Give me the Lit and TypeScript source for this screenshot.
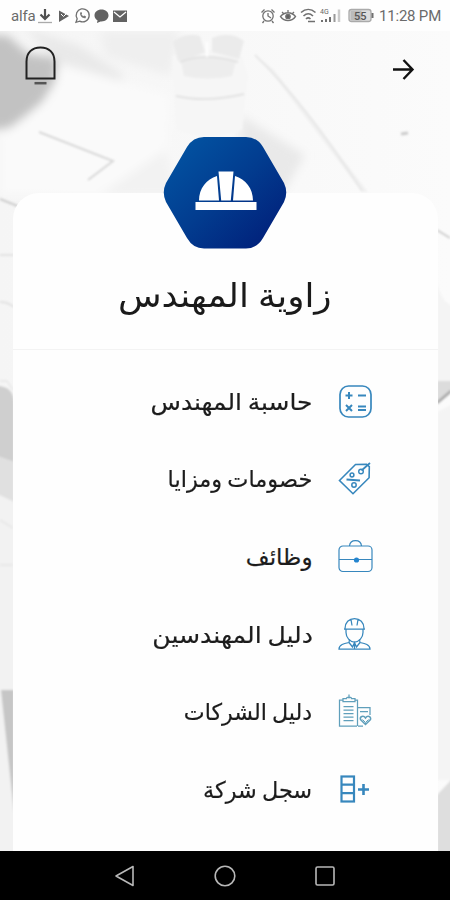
import { LitElement, html, svg, css } from "lit";
import { customElement, property } from "lit/decorators.js";

const icons: Record<string, unknown> = {
  calculator: svg`<g stroke-width="1.700"><rect x="2" y="2" width="31" height="31" rx="8.500"/>
    <path d="M11 8v7M7.500 11.500h7M20 11.500h8M8 21l6 6M14 21l-6 6M20 22.500h8M20 26h8" stroke-width="2"/></g>`,
  tag: svg`<path d="M1.500 19.500 17.500 3.500l11-.3 2.800 2.500-.2 11L15 32.700z" stroke-width="1.600"/>
    <circle cx="23" cy="10.500" r="2.300" stroke-width="1.400"/><path d="M23.500 9.500 32 2" stroke-width="1.700"/>
    <path d="M8.500 18.500l13.500 1" stroke-width="1.900"/><circle cx="14" cy="14" r="1.900" stroke-width="1.500"/><circle cx="16" cy="24" r="2.200" stroke-width="1.500"/>`,
  briefcase: svg`<g stroke-width="1.200"><rect x="1" y="7" width="33" height="25.500" rx="4"/><path d="M11.500 7c.3-3.500 2.500-5.300 6-5.300s5.700 1.800 6 5.300M1 20.500h33"/></g>
    <circle cx="18.500" cy="21" r="2.600" fill="#2485cf" stroke="none"/>`,
  engineer: svg`<g stroke-width="1.250"><path d="M7 11.500C7 5.500 11 1.500 16.500 1.500S26 5.500 26 11.500M6 12h21M8 12v3.500c0 5 4 9.500 8.500 9.500s8.500-4.500 8.500-9.500V12M13 2.500l1 6M20 2.500l-1 6"/>
    <path d="M11.500 22.500l-.5 3c-5 1-10 2-10 6.500h31c0-4.500-5-5.500-10-6.500l-.5-3M11 25.500l3.500 4.500 2-4.500 2 4.500 3.500-4.500M16.500 26v6"/></g>`,
  clipboard: svg`<g stroke="#5f9fbb" stroke-width="1.250"><path d="M19 32H1.500V6H5M17 6h2.500v26M5 7.500V4.500h3.500c0-2 5-2 5 0H17v3zM11 .5v4M5.500 12.500h10M5.500 16h10M5.500 19.500h10M5.500 23h10M5.500 26.500h10"/>
    <path d="M20 13.500h12V21M22 17.500h8M20 32h5"/></g><path d="M27.500 30.500l-5-5c-1-3 3-4.500 5-1.500 2-3 6-1.500 5 1.500z" stroke="#5f9fbb" stroke-width="1.500"/><path d="M24.500 25.500l3 3 3-3" stroke="#5f9fbb"/>`,
  register: svg`<g stroke-width="2.200"><rect x="3.500" y="4.500" width="12.500" height="25"/><path d="M4 12.700h12M4 21.200h12"/></g><path d="M25.500 12v11M20 17.500h11" stroke-width="2.600"/>`,
};

const menu = [
  { icon: "calculator", label: "حاسبة المهندس", scale: 1.083 },
  { icon: "tag", label: "خصومات ومزايا", scale: 0.976 },
  { icon: "briefcase", label: "وظائف", scale: 1 },
  { icon: "engineer", label: "دليل المهندسين", scale: 1.093 },
  { icon: "clipboard", label: "دليل الشركات", scale: 0.964 },
  { icon: "register", label: "سجل شركة", scale: 0.973 },
];

@customElement("menu-row")
class MenuRow extends LitElement {
  @property() icon = "";
  @property() label = "";
  @property({ type: Number }) scale = 1;
  static styles = css`
    :host { display: flex; direction: rtl; align-items: center; height: 77.6px; padding-right: 65px; gap: 25px; }
    svg { width: 35px; height: 35px; flex: none; fill: none; stroke: #3787bd; }
    .label { font: 23px/32px "DejaVu Sans", sans-serif; color: #1c1c1c; white-space: nowrap; word-spacing: -2px; margin-top: 1px; transform-origin: right center; -webkit-text-stroke: .2px #1c1c1c; }
  `;
  render() {
    return html`<svg viewBox="0 0 35 35">${icons[this.icon]}</svg>
      <span class="label" style="transform:scaleX(${this.scale})">${this.label}</span>`;
  }
}

@customElement("status-bar")
class StatusBar extends LitElement {
  static styles = css`
    :host { display: flex; align-items: center; justify-content: space-between; height: 31px; background: #fefefe; color: #6b6b6b; font: 15px/31px Roboto, sans-serif; }
    .side { display: flex; align-items: center; height: 31px; }
    .left { padding-left: 11px; }
    .right { padding-right: 9px; }
    .carrier { width: 26px; letter-spacing: -.2px; }
    .clock { width: 62px; white-space: nowrap; letter-spacing: -.2px; }
    .carrier, .clock { margin-top: 2px; }
    svg { display: block; fill: none; stroke: #707070; stroke-width: 1.300; }
  `;
  render() {
    return html`
      <div class="side left"><span class="carrier">alfa</span>
        <svg width="92" height="31" viewBox="37 0 92 31">
          <path d="M45 9v9M40.500 14.500l4.500 4.500 4.500-4.500" stroke="#505050" stroke-width="2.200"/><path d="M38 22.500h14" stroke="#aaa"/>
          <path d="M59 10.500l10 5.500-10 6z" fill="#626262" stroke="none"/><path d="M61 14l2.500 2.500L68 12" stroke="#fff" stroke-width="1"/>
          <path d="M76 22.300l1.200-3.500a6.500 6.500 0 1 1 2.500 2.300z"/><path d="M80.200 12.500c-.8 3 2.200 6.200 5.300 5.700l.6-1.700-2-1-.9.800-1.700-1.800.6-1-.7-1.500z" fill="#777" stroke="none"/>
          <path d="M101.500 9.500c-4 0-7 2.500-7 6 0 2 1.200 3.800 3 4.800l-.5 2.700 3.500-1.600c4.500.4 8-2.300 8-5.900s-3-6-7-6z" fill="#626262" stroke="none"/>
          <path d="M113 10.500h14v11.500h-14z" fill="#626262" stroke="none"/><path d="M114 12l6 5 6-5" stroke="#fff" stroke-width="1.300"/>
        </svg></div>
      <div class="side right">
        <svg width="120" height="31" viewBox="258 0 120 31">
          <circle cx="267" cy="16" r="5.200"/><path d="M267 13v3l3 2M260.500 12.500l3-3M270.500 9.500l3 3M263 21l-1.500 2M271 21l1.500 2"/>
          <path d="M279.500 16.500c4-5 11-5 15 0-4 5.500-11 5.500-15 0zM281 12l2 2M287 10v3M293 12l-2 2"/><circle cx="287" cy="16.500" r="2.200" fill="#606060"/>
          <path d="M300 12.500c4.500-4 10-4 14.500 0M302.500 16c3-2.800 6.500-2.800 9.500 0M305 19c1.500-1.500 3-1.500 4.500 0M307 21.500h7" stroke-width="1.600"/>
          <text x="319" y="14" font-family="Roboto" font-size="7" stroke="none" fill="#666">4G</text>
          <path d="M321 22v-2M325 22v-3M329 22v-5" stroke-width="2"/><path d="M333.500 22V14" stroke="#999" stroke-width="2"/><path d="M338 22V9.500" stroke="#ccc" stroke-width="2.500"/>
          <rect x="348" y="9.500" width="22" height="12" rx="2.500" fill="#ddd" stroke="#aaa"/><path d="M349.500 10.500h11v10h-11z" fill="#bbb" stroke="none"/><path d="M371.500 13v5" stroke-width="2"/>
          <text x="353" y="20" font-family="Roboto" font-size="11" font-weight="500" stroke="none" fill="#555">55</text>
        </svg><span class="clock">11:28 PM</span></div>`;
  }
}

@customElement("desk-backdrop")
class DeskBackdrop extends LitElement {
  static styles = css`
    :host { display: block; position: absolute; inset: 0; }
    svg { display: block; width: 100%; height: 100%; }
  `;
  render() {
    return html`<svg viewBox="0 31 450 820" preserveAspectRatio="none">
      <defs>
        <linearGradient id="base" x2="1" y2="0"><stop stop-color="#f5f5f5"/><stop offset=".5" stop-color="#f8f8f8"/><stop offset="1" stop-color="#fbfbfb"/></linearGradient>
        <filter id="s" x="-30%" y="-30%" width="160%" height="160%"><feGaussianBlur stdDeviation="5"/></filter>
        <filter id="t"><feGaussianBlur stdDeviation="1"/></filter>
      </defs>
      <rect y="31" width="450" height="820" fill="url(#base)"/>
      <g filter="url(#s)">
        <path d="M-15 35 8 36 28 54 58 58 55 82 42 102 12 128-15 130z" fill="#c2c2c2"/>
        <path d="M25 28l55 18 45 30-8 8-60-22z" fill="#e9e9e9"/>
        <path d="M0 135 45 102 65 65 170 95 165 195H0z" fill="#fafafa"/>
        <path d="M100 31h80l-10 45-65-20z" fill="#efefef"/>
        <path d="M240 115 305 155 285 190 240 190z" fill="#e9e9e9"/>
        <path d="M165 150 100 195h75z" fill="#f2f2f2"/>
      </g>
      <g filter="url(#t)" fill="none">
        <path d="M172 56q30-12 70 0l6 20-6 54q-35 12-66 0z" fill="#f6f6f6"/>
        <path d="M181 61q25-9 55 0l-4 15q-25 5-48 0z" fill="#ededed"/>
        <path d="M180 62q25-10 58 0M176 96q30 7 68-2" stroke="#e2e2e2" stroke-width="2"/>
        <path d="M173 42q12-10 27-6l5 16q-12 6-27 9zM212 38q18-8 32 3l-5 18-27-7z" fill="#ebebeb"/>
        <path d="M207 42v15" stroke="#fff" stroke-width="2"/>
        <path d="M262 60l100 132h6L274 70z" fill="#f1f1f1"/>
        <path d="M255 55q50 48 107 136" stroke="#e7e7e7" stroke-width="2"/>
        <path d="M39 132 113 161 88 180" stroke="#d8d8d8" stroke-width="2"/>
        <path d="M0 199l20 8M437 230l13 8" stroke="#ccc" stroke-width="2"/>
        <path d="M401 134l7-1" stroke="#ccc" stroke-width="3"/><path d="M0 255h14M0 302q8 0 14 5" stroke="#e2e2e2" stroke-width="2"/>
        <path d="M-3 386q17 0 17 18v58l-17-6z" fill="#cfcfcf"/><path d="M-3 456l17 6v40l-17-8z" fill="#e0e0e0"/>
        <path d="M-3 494l17 8v350h-17z" fill="#f2f2f2"/>
        <path d="M0 381h7l6 9M0 520l13 8M0 565h13" stroke="#ddd"/>
        <path d="M1 690h13v122z" fill="#c6c6c6"/>
        <path d="M437 282q4 20 16 24v80h-16zM437 412l16-8v376h-16z" fill="#f4f4f4"/>
        <path d="M437 381h16v10l-16 13z" fill="#dcdcdc"/><path d="M437 403l14-12" stroke="#a6a6a6" stroke-width="2.500"/>
        <path d="M437 795l16-17v76h-16z" fill="#dedede"/>
      </g></svg>`;
  }
}

@customElement("app-root")
class AppRoot extends LitElement {
  static styles = css`
    :host { display: flex; flex-direction: column; width: 450px; height: 900px; overflow: hidden; background: #fff; }
    .main { position: relative; height: 820px; flex: none; display: flex; flex-direction: column; overflow: hidden; }
    .top { position: relative; display: flex; justify-content: space-between; padding: 14px 35px 0 24px; height: 92px; box-sizing: border-box; flex: none; }
    .bell { width: 33px; height: 42px; }
    .arrow { width: 24px; height: 24px; margin-top: 12px; }
    .content { position: relative; flex: none; display: flex; flex-direction: column; align-items: center; margin-top: 13px; }
    .badge { width: 124px; height: 113px; margin-bottom: -56px; z-index: 1; }
    .card { width: 425px; height: 670px; background: #fefefe; border-radius: 26px 26px 0 0; box-sizing: border-box; padding-top: 56px; }
    .title { height: 100px; margin: 0; border-bottom: 1.500px solid #f3f3f3; font: 33px/94px "DejaVu Sans", sans-serif; color: #1a1a1a; text-align: center; direction: rtl; white-space: nowrap; word-spacing: -2px; }
    .title span { display: inline-block; transform: scaleX(1.082); }
    .list { display: flex; flex-direction: column; padding-top: 12.5px; }
    .nav { height: 49px; background: #000; flex: none; display: flex; justify-content: center; gap: 76px; align-items: center; }
    .nav svg { width: 24px; height: 24px; fill: none; stroke: #b8b8b8; stroke-width: 1.600; }
  `;
  render() {
    return html`<status-bar></status-bar>
      <div class="main"><desk-backdrop></desk-backdrop>
        <div class="top">
          <svg class="bell" viewBox="0 0 33 42" fill="none" stroke="#222" stroke-width="2"><path d="M2.500 33.500V16.500C2.500 7.500 8 2.500 16.500 2.500S30.500 7.500 30.500 16.500v17z"/><path d="M10.500 38.200h12" stroke="#555" stroke-width="2.500"/></svg>
          <svg class="arrow" viewBox="0 0 24 24" fill="none" stroke="#111" stroke-width="2.400"><path d="M2 12.500h20M12.500 3l9 9.500-9 9.500"/></svg>
        </div>
        <div class="content">
          <svg class="badge" viewBox="0 0 124 113">
            <defs><linearGradient id="hex" x1=".1" y1=".1" x2=".9" y2=".9"><stop stop-color="#0252a1"/><stop offset=".5" stop-color="#023c8f"/><stop offset="1" stop-color="#01217b"/></linearGradient></defs>
            <path d="M41 1H83Q94 1 100 11L121 47Q125.500 56.500 121 66L100 102Q94 112.500 83 112.500H41Q30 112.500 24 102L3 66Q-1.500 56.500 3 47L24 11Q30 1 41 1Z" fill="url(#hex)"/>
            <g fill="#fff"><path d="M32.500 66h61v8h-61zM36 64.500c0-12 7.500-21.500 18-24.500l2 24.500zM90 64.500c0-12-7.500-21.500-18-24.500l-2 24.500zM55.500 35.500h15l-2.700 29h-9.600z"/></g>
          </svg>
          <section class="card"><h1 class="title"><span>زاوية المهندس</span></h1>
            <div class="list">${menu.map((m) => html`<menu-row .icon=${m.icon} .label=${m.label} .scale=${m.scale}></menu-row>`)}</div>
          </section>
        </div>
      </div>
      <nav class="nav">
        <svg viewBox="0 0 24 24"><path d="M3 12 20 2.500v19z" stroke-linejoin="round"/></svg>
        <svg viewBox="0 0 24 24"><circle cx="12" cy="12" r="9.800"/></svg>
        <svg viewBox="0 0 24 24"><rect x="3" y="3" width="18" height="18" rx="1.500"/></svg>
      </nav>`;
  }
}
